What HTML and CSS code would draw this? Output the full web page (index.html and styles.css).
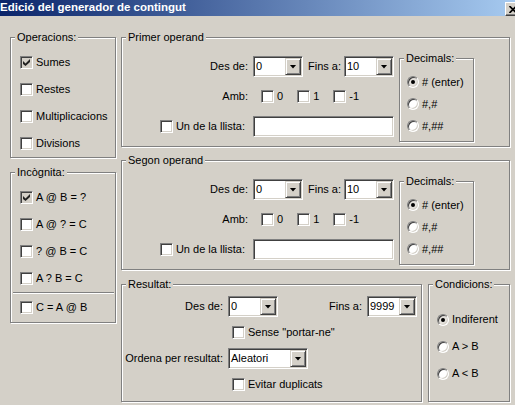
FILE: index.html
```html
<!DOCTYPE html>
<html>
<head>
<meta charset="utf-8">
<title>Edició del generador de contingut</title>
<link rel="stylesheet" href="styles.css">
</head>
<body>
<div class="window">
  <div class="titlebar">
    <span class="title">Edició del generador de contingut</span>
    <span class="close"><svg width="8" height="7" viewBox="0 0 8 7"><path d="M0.5 0 L7.5 7 M7.5 0 L0.5 7" stroke="#000" stroke-width="1.6" fill="none"/></svg></span>
  </div>
  <div class="content">
    <div class="leftcol">
      <fieldset class="group ops">
        <legend>Operacions:</legend>
        <div class="row27"><span class="cb on"></span>Sumes</div>
        <div class="row27"><span class="cb"></span>Restes</div>
        <div class="row27"><span class="cb"></span>Multiplicacions</div>
        <div class="row27"><span class="cb"></span>Divisions</div>
      </fieldset>
      <fieldset class="group inc">
        <legend>Incògnita:</legend>
        <div class="row27"><span class="cb on"></span>A @ B = ?</div>
        <div class="row27"><span class="cb"></span>A @ ? = C</div>
        <div class="row27"><span class="cb"></span>? @ B = C</div>
        <div class="row27"><span class="cb"></span>A ? B = C</div>
        <div class="sep"></div>
        <div class="row27"><span class="cb"></span>C = A @ B</div>
      </fieldset>
    </div>
    <div class="rightcol">
      <fieldset class="group operand">
        <legend>Primer operand</legend>
        <div class="opbody">
          <div class="opgrid">
            <span class="lbl">Des de:</span>
            <div class="ctl pair">
              <span class="combo w50"><span class="val">0</span><span class="drop"></span></span>
              <span class="fins">Fins a:</span>
              <span class="combo w50"><span class="val">10</span><span class="drop"></span></span>
            </div>
            <span class="lbl">Amb:</span>
            <div class="ctl amb">
              <span class="chk"><span class="cb"></span>0</span>
              <span class="chk"><span class="cb"></span>1</span>
              <span class="chk"><span class="cb"></span>-1</span>
            </div>
            <span class="lbl llista"><span class="cb"></span>Un de la llista:</span>
            <div class="ctl"><span class="textbox"></span></div>
          </div>
          <fieldset class="group decimals">
            <legend>Decimals:</legend>
            <div class="row22"><span class="rb on"></span># (enter)</div>
            <div class="row22"><span class="rb"></span>#,#</div>
            <div class="row22"><span class="rb"></span>#,##</div>
          </fieldset>
        </div>
      </fieldset>
      <fieldset class="group operand second">
        <legend>Segon operand</legend>
        <div class="opbody">
          <div class="opgrid">
            <span class="lbl">Des de:</span>
            <div class="ctl pair">
              <span class="combo w50"><span class="val">0</span><span class="drop"></span></span>
              <span class="fins">Fins a:</span>
              <span class="combo w50"><span class="val">10</span><span class="drop"></span></span>
            </div>
            <span class="lbl">Amb:</span>
            <div class="ctl amb">
              <span class="chk"><span class="cb"></span>0</span>
              <span class="chk"><span class="cb"></span>1</span>
              <span class="chk"><span class="cb"></span>-1</span>
            </div>
            <span class="lbl llista"><span class="cb"></span>Un de la llista:</span>
            <div class="ctl"><span class="textbox"></span></div>
          </div>
          <fieldset class="group decimals">
            <legend>Decimals:</legend>
            <div class="row22"><span class="rb on"></span># (enter)</div>
            <div class="row22"><span class="rb"></span>#,#</div>
            <div class="row22"><span class="rb"></span>#,##</div>
          </fieldset>
        </div>
      </fieldset>
      <div class="bottomrow">
        <fieldset class="group resultat">
          <legend>Resultat:</legend>
          <div class="resgrid">
            <span class="lbl">Des de:</span>
            <div class="ctl">
              <span class="combo w50"><span class="val">0</span><span class="drop"></span></span>
              <span class="fins-r">Fins a:</span>
              <span class="combo w50"><span class="val">9999</span><span class="drop"></span></span>
            </div>
            <span></span>
            <div class="ctl indent"><span class="cb"></span>Sense "portar-ne"</div>
            <span class="lbl">Ordena per resultat:</span>
            <div class="ctl"><span class="combo w80"><span class="val">Aleatori</span><span class="drop"></span></span></div>
            <span></span>
            <div class="ctl indent"><span class="cb"></span>Evitar duplicats</div>
          </div>
        </fieldset>
        <fieldset class="group condicions">
          <legend>Condicions:</legend>
          <div class="row27"><span class="rb on"></span>Indiferent</div>
          <div class="row27"><span class="rb"></span>A &gt; B</div>
          <div class="row27"><span class="rb"></span>A &lt; B</div>
        </fieldset>
      </div>
    </div>
  </div>
</div>
</body>
</html>
```
FILE: styles.css
```css
* { box-sizing: border-box; }

body {
  margin: 0;
  background: #d4d0c8;
  font-family: "Liberation Sans", Arial, sans-serif;
  font-size: 11px;
  line-height: 13px;
  color: #000;
}

.window {
  width: 515px;
  height: 405px;
  overflow: hidden;
  background: #d4d0c8;
}

.titlebar {
  height: 16px;
  display: flex;
  justify-content: space-between;
  align-items: flex-start;
  background: linear-gradient(to right, #0a246a, #a6caf0);
  overflow: hidden;
}

.title {
  color: #fff;
  font-weight: bold;
  font-size: 11.5px;
  line-height: 15px;
  white-space: nowrap;
}

.close {
  width: 16px;
  height: 14px;
  margin-top: 2px;
  margin-right: -6px;
  flex: none;
  display: flex;
  align-items: center;
  justify-content: center;
  background: #d4d0c8;
  border: 1px solid;
  border-color: #fff #404040 #404040 #fff;
  box-shadow: inset -1px -1px #808080;
}

.content {
  display: flex;
  gap: 5px;
  padding: 15px 0 0 10px;
}

.leftcol {
  width: 106px;
  display: flex;
  flex-direction: column;
  gap: 8px;
}

.rightcol {
  width: 389px;
  display: flex;
  flex-direction: column;
}

/* group box */
.group {
  margin: 0;
  padding: 0;
  min-width: 0;
  border: 1px solid #808080;
  box-shadow: inset 1px 1px #fff, 1px 1px #fff;
}

.group > legend {
  margin-left: 4px;
  padding: 0 2px;
  line-height: 13px;
  background: #d4d0c8;
  white-space: nowrap;
}

.ops { padding: 5px 0 0 9px; }
.inc { padding: 5px 0 1px 9px; }
.ops > legend, .inc > legend { margin-left: -5px; }

.row27 {
  height: 27px;
  display: flex;
  align-items: center;
  gap: 3px;
  white-space: nowrap;
}

.row22 {
  height: 22px;
  display: flex;
  align-items: center;
  gap: 3px;
  white-space: nowrap;
}

.sep {
  height: 2px;
  margin: 0 1px 0 -7px;
  border-top: 1px solid #808080;
  border-bottom: 1px solid #fff;
}

/* operand groups */
.operand { padding: 8px 0 4px 0; }
.second { margin-top: 7px; }

.opbody {
  display: flex;
  align-items: flex-start;
}

.opgrid {
  margin-top: 4px;
  width: 272px;
  display: grid;
  grid-template-columns: 126px 141px;
  grid-template-rows: 21px 21px 21px;
  column-gap: 5px;
  row-gap: 9px;
}

.lbl {
  align-self: center;
  text-align: right;
  white-space: nowrap;
}

.llista {
  display: flex;
  align-items: center;
  justify-content: flex-end;
  gap: 3px;
  padding-right: 3px;
}

.ctl {
  display: flex;
  align-items: center;
  white-space: nowrap;
}

.pair { justify-content: space-between; }
.pair .fins { margin-left: 5px; margin-right: auto; }
.fins-r { margin-left: auto; margin-right: 5px; }

.amb { padding-left: 8px; gap: 14px; }
.chk { display: flex; align-items: center; gap: 3px; }

.indent { padding-left: 4px; gap: 3px; }

.decimals {
  width: 75px;
  margin-left: 5px;
  padding: 6px 0 4px 7px;
}
.decimals > legend { margin-left: -3px; }

/* bottom row */
.bottomrow {
  margin-top: 8px;
  display: flex;
  gap: 6px;
}

.resultat {
  width: 301px;
  padding: 5px 4px 6px 0;
}

.resgrid {
  display: grid;
  grid-template-columns: 101px 1fr;
  grid-auto-rows: 21px;
  column-gap: 5px;
  row-gap: 5px;
}

.condicions {
  width: 82px;
  padding: 15px 0 0 8px;
}
.condicions > legend { margin-left: -4px; }

/* controls */
.combo, .textbox {
  height: 21px;
  display: flex;
  padding: 1px;
  background: #fff;
  border: 1px solid;
  border-color: #808080 #fff #fff #808080;
  box-shadow: inset 1px 1px #404040, inset -1px -1px #d4d0c8;
  flex: none;
}

.w50 { width: 50px; }
.w80 { width: 80px; }
.textbox { width: 141px; }

.val {
  flex: 1;
  padding-left: 1px;
  line-height: 17px;
  overflow: hidden;
}

.drop {
  width: 16px;
  height: 17px;
  flex: none;
  display: flex;
  align-items: center;
  justify-content: center;
  background: #d4d0c8;
  border: 1px solid;
  border-color: #d4d0c8 #404040 #404040 #d4d0c8;
  box-shadow: inset 1px 1px #fff, inset -1px -1px #808080;
}

.drop::after {
  content: "";
  width: 7px;
  height: 4px;
  background: #000;
  clip-path: polygon(0 0, 100% 0, 50% 100%);
}

.cb {
  position: relative;
  width: 13px;
  height: 13px;
  flex: none;
  background: #fff;
  border: 1px solid;
  border-color: #808080 #fff #fff #808080;
  box-shadow: inset 1px 1px #404040, inset -1px -1px #d4d0c8;
}

.cb.on { background: #d4d0c8; }

.cb.on::after {
  content: "";
  position: absolute;
  left: 2px;
  top: 2px;
  width: 7px;
  height: 7px;
  background: #222;
  clip-path: polygon(0 28%, 36% 64%, 100% 0, 100% 43%, 36% 100%, 0 71%);
}

.rb {
  position: relative;
  width: 12px;
  height: 12px;
  flex: none;
  border-radius: 50%;
  background: #fff;
  border: 1px solid;
  border-color: #808080 #fff #fff #808080;
  box-shadow: inset 1px 1px #404040, inset -1px -1px #d4d0c8;
}

.rb.on { background: #e4e1dc; }

.rb.on::after {
  content: "";
  position: absolute;
  left: 3px;
  top: 3px;
  width: 4px;
  height: 4px;
  border-radius: 50%;
  background: #000;
}
```
